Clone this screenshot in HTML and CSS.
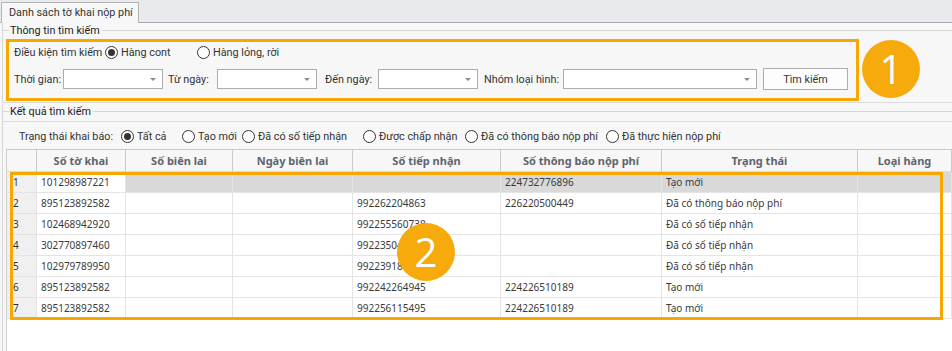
FILE: index.html
```html
<!DOCTYPE html>
<html lang="vi">
<head>
<meta charset="utf-8">
<title>Danh sách tờ khai nộp phí</title>
<link rel="stylesheet" href="styles.css">
</head>
<body>
<div class="page">
  <div class="tabbar">
    <div class="tab">Danh sách tờ khai nộp phí</div>
  </div>

  <div class="group group-search">
    <div class="legend"><span>Thông tin tìm kiếm</span></div>
    <div class="hl-box">
      <div class="row row-cond">
        <span class="lbl lbl-cond">Điều kiện tìm kiếm</span>
        <label class="opt opt-cont"><span class="radio checked"></span><span>Hàng cont</span></label>
        <label class="opt"><span class="radio"></span><span>Hàng lỏng, rời</span></label>
      </div>
      <div class="row row-fields">
        <span class="lbl w-time">Thời gian:</span>
        <span class="combo w100"></span>
        <span class="lbl w-from">Từ ngày:</span>
        <span class="combo w100"></span>
        <span class="lbl w-to">Đến ngày:</span>
        <span class="combo w100"></span>
        <span class="lbl w-group">Nhóm loại hình:</span>
        <span class="combo w194"></span>
        <button class="btn">Tìm kiếm</button>
      </div>
    </div>
  </div>

  <div class="group group-result">
    <div class="legend"><span>Kết quả tìm kiếm</span></div>
    <div class="panel">
      <div class="row status-row">
        <span class="lbl lbl-status">Trạng thái khai báo:</span>
        <label class="opt s1"><span class="radio checked"></span><span>Tất cả</span></label>
        <label class="opt s2"><span class="radio"></span><span>Tạo mới</span></label>
        <label class="opt s3"><span class="radio"></span><span>Đã có số tiếp nhận</span></label>
        <label class="opt s4"><span class="radio"></span><span>Được chấp nhận</span></label>
        <label class="opt s5"><span class="radio"></span><span>Đã có thông báo nộp phí</span></label>
        <label class="opt s6"><span class="radio"></span><span>Đã thực hiện nộp phí</span></label>
      </div>
      <div class="grid">
        <div class="gr head">
          <div class="c ind"></div>
          <div class="c">Số tờ khai</div>
          <div class="c">Số biên lai</div>
          <div class="c">Ngày biên lai</div>
          <div class="c">Số tiếp nhận</div>
          <div class="c">Số thông báo nộp phí</div>
          <div class="c">Trạng thái</div>
          <div class="c">Loại hàng</div>
        </div>
        <div class="gr sel">
          <div class="c ind">1</div><div class="c focus">101298987221</div><div class="c"></div><div class="c"></div><div class="c"></div><div class="c">224732776896</div><div class="c">Tạo mới</div><div class="c"></div>
        </div>
        <div class="gr">
          <div class="c ind">2</div><div class="c">895123892582</div><div class="c"></div><div class="c"></div><div class="c">992262204863</div><div class="c">226220500449</div><div class="c">Đã có thông báo nộp phí</div><div class="c"></div>
        </div>
        <div class="gr">
          <div class="c ind">3</div><div class="c">102468942920</div><div class="c"></div><div class="c"></div><div class="c">992255560738</div><div class="c"></div><div class="c">Đã có số tiếp nhận</div><div class="c"></div>
        </div>
        <div class="gr">
          <div class="c ind">4</div><div class="c">302770897460</div><div class="c"></div><div class="c"></div><div class="c">992235046210</div><div class="c"></div><div class="c">Đã có số tiếp nhận</div><div class="c"></div>
        </div>
        <div class="gr">
          <div class="c ind">5</div><div class="c">102979789950</div><div class="c"></div><div class="c"></div><div class="c">992239187325</div><div class="c"></div><div class="c">Đã có số tiếp nhận</div><div class="c"></div>
        </div>
        <div class="gr">
          <div class="c ind">6</div><div class="c">895123892582</div><div class="c"></div><div class="c"></div><div class="c">992242264945</div><div class="c">224226510189</div><div class="c">Tạo mới</div><div class="c"></div>
        </div>
        <div class="gr">
          <div class="c ind">7</div><div class="c">895123892582</div><div class="c"></div><div class="c"></div><div class="c">992256115495</div><div class="c">224226510189</div><div class="c">Tạo mới</div><div class="c"></div>
        </div>
      </div>
    </div>
  </div>

  <div class="hl-rows"></div>
  <div class="badge badge-1">1</div>
  <div class="badge badge-2">2</div>
</div>
</body>
</html>
```

FILE: styles.css
```css
* { box-sizing: border-box; }
html, body { margin: 0; padding: 0; }
body {
  width: 952px;
  height: 351px;
  overflow: hidden;
  background: #f7f7f7;
  font-family: Roboto, "Noto Sans", sans-serif;
  font-size: 10.8px;
  color: #333;
}
.page { position: relative; width: 952px; height: 351px; overflow: hidden; }

.tabbar {
  height: 23px;
  background: #e9eaee;
  border-bottom: 1px solid #a8a8a8;
  padding: 2px 0 0 1px;
  display: flex;
}
.tab {
  height: 21px;
  width: 138px;
  background: #f7f7f7;
  border: 1px solid #b4b4b4;
  border-bottom: none;
  padding: 0 0 0 7px;
  line-height: 19px;
  font-size: 10.8px;
  color: #333;
  white-space: nowrap;
}

.group { margin-left: 2px; border-left: 1px solid #d6d6d6; }
.legend {
  display: flex;
  align-items: center;
  height: 15px;
  white-space: nowrap;
}
.legend::before { content: ""; width: 6px; border-top: 1px solid #d6d6d6; }
.legend::after { content: ""; flex: 1; border-top: 1px solid #d6d6d6; }
.legend span { padding: 0 2px 0 1px; color: #222; font-size: 10.8px; }

.group-search { padding-bottom: 1px; border-bottom: 1px solid #dcdcdc; }
.hl-box {
  margin: 1px 0 0 3px;
  width: 853px;
  border: 3px solid #f6a800;
  padding: 0 0 8px 5px;
}
.row { display: flex; align-items: center; white-space: nowrap; }
.row-cond { height: 20px; }
.row-fields { height: 22px; margin-top: 6px; }

.lbl { flex: none; color: #333; }
.lbl-cond { width: 91px; }
.opt { display: flex; align-items: center; flex: none; color: #333; }
.opt-cont { width: 92px; }
.radio {
  flex: none;
  width: 13px;
  height: 13px;
  border: 1px solid #333;
  border-radius: 50%;
  margin-right: 3px;
  background: #fff;
  position: relative;
}
.radio.checked::after {
  content: "";
  position: absolute;
  left: 2px; top: 2px;
  width: 7px; height: 7px;
  border-radius: 50%;
  background: #333;
}

.w-time { width: 49px; }
.w-from { width: 49px; margin-left: 5px; }
.w-to { width: 53px; margin-left: 8px; }
.w-group { width: 79px; margin-left: 6px; }
.combo {
  flex: none;
  height: 20px;
  background: #fff;
  border: 1px solid #acacac;
  position: relative;
}
.combo::after {
  content: "";
  position: absolute;
  right: 6px; top: 8px;
  border-left: 3px solid transparent;
  border-right: 3px solid transparent;
  border-top: 3px solid #8a8a8a;
}
.w100 { width: 100px; }
.w194 { width: 194px; }
.btn {
  flex: none;
  margin-left: 6px;
  width: 85px;
  height: 22px;
  background: #fdfdfd;
  border: 1px solid #adadad;
  font: inherit;
  color: #333;
  padding: 0;
}

.group-result { margin-top: 1px; }
.panel {
  margin-top: 2px;
  border-top: 1px solid #dcdcdc;
  background: #f7f7f7;
}
.status-row { height: 20px; margin-top: 4px; padding-left: 16px; }
.lbl-status { width: 102px; }
.s1 { width: 61px; }
.s2 { width: 60px; }
.s3 { width: 121px; }
.s4 { width: 102px; }
.s5 { width: 141px; overflow: hidden; }

.grid {
  margin-top: 3px;
  margin-left: 3px;
  border-left: 1px solid #cfcfcf;
  border-top: 1px solid #c9c9c9;
  background: #fff;
  height: 230px;
}
.gr {
  display: grid;
  grid-template-columns: 30px 89px 107px 120px 148px 161px 196px 1fr;
  height: 21px;
}
.c {
  border-right: 1px solid #e4e4e4;
  border-bottom: 1px solid #e4e4e4;
  padding-left: 4px;
  display: flex;
  align-items: center;
  white-space: nowrap;
  overflow: hidden;
  font-family: "Noto Sans", sans-serif;
  font-size: 10px;
  color: #3a3a3a;
}
.c.ind { background: #f0f0f0; padding-left: 6px; color: #333; }
.head { height: 22px; background: #f7f7f7; }
.head .c {
  justify-content: center;
  padding: 0;
  font-size: 11px;
  font-weight: 700;
  color: #60646c;
  border-right: 1px solid #c8c8c8;
  border-bottom: 1px solid #dcdcdc;
  background: #f7f7f7;
}
.sel .c { background: #d9d9d9; }
.sel .c.ind { background: #f0f0f0; }
.sel .c.focus { background: #fff; }

.hl-rows {
  position: absolute;
  left: 10px;
  top: 172px;
  width: 933px;
  height: 148px;
  border: 3px solid #f6a800;
}
.badge {
  position: absolute;
  width: 58px;
  height: 58px;
  border-radius: 50%;
  background: #f6aa0c;
  color: #fff;
  font-family: "Open Sans", "Noto Sans", sans-serif;
  font-size: 40px;
  line-height: 58px;
  text-align: center;
}
.badge-1 { left: 862px; top: 40px; }
.badge-2 { left: 397px; top: 223px; }
```
